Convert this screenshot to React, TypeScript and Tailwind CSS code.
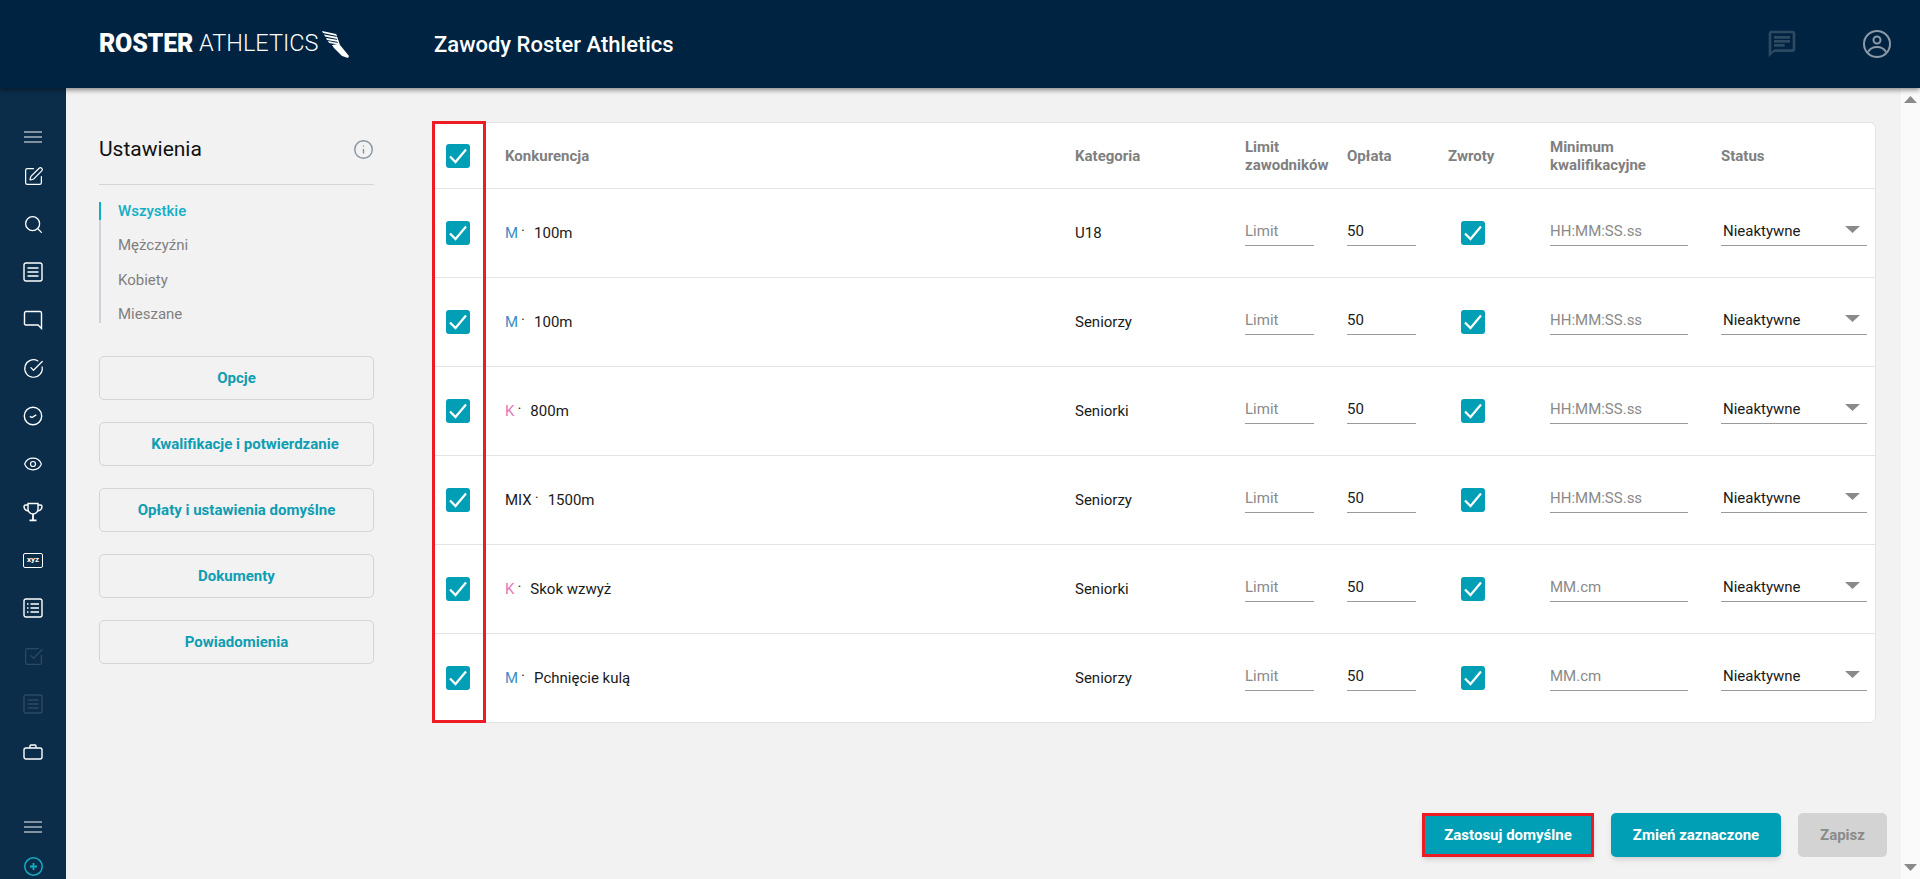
// App.tsx - ustawienia zawodów Roster Athletics
import React from "react";
import { Search, SquarePen, Eye, SquareCheckBig, CircleCheckBig, Info } from "lucide-react";

type Row = {
    sex: string;
    sexColor: string;
    name: string;
    category: string;
    minimum: string;
};

const rows: Row[] = [
    { sex: "M", sexColor: "text-[#3b8dc5]", name: "100m", category: "U18", minimum: "HH:MM:SS.ss" },
    { sex: "M", sexColor: "text-[#3b8dc5]", name: "100m", category: "Seniorzy", minimum: "HH:MM:SS.ss" },
    { sex: "K", sexColor: "text-[#e27ab5]", name: "800m", category: "Seniorki", minimum: "HH:MM:SS.ss" },
    { sex: "MIX", sexColor: "text-[#1a1a1a]", name: "1500m", category: "Seniorzy", minimum: "HH:MM:SS.ss" },
    { sex: "K", sexColor: "text-[#e27ab5]", name: "Skok wzwyż", category: "Seniorki", minimum: "MM.cm" },
    { sex: "M", sexColor: "text-[#3b8dc5]", name: "Pchnięcie kulą", category: "Seniorzy", minimum: "MM.cm" },
];

const panelButtons = [
    "Opcje",
    "Kwalifikacje i potwierdzanie",
    "Opłaty i ustawienia domyślne",
    "Dokumenty",
    "Powiadomienia",
];

const gridCols = "grid grid-cols-[72px_570px_170px_102px_101px_102px_171px_1fr] items-center";

const Check = () => (
    <span className="flex h-6 w-6 items-center justify-center rounded-[3px] bg-[#009fb5]">
        <svg width="20" height="20" viewBox="0 0 20 20" fill="none" stroke="#fff" strokeWidth="2.2">
            <path d="M2 10.500 7.500 16 18 3.500" />
        </svg>
    </span>
);

const Burger = () => (
    <svg width="18" height="12" viewBox="0 0 18 12" stroke="#a9b4be" strokeWidth="1.3">
        <path d="M0 1h18M0 6h18M0 11h18" />
    </svg>
);

const ArticleBox = ({ color = "#fff" }: { color?: string }) => (
    <svg width="20" height="20" viewBox="0 0 20 20" fill="none" stroke={color} strokeWidth="1.4">
        <rect x="1" y="1" width="18" height="18" rx="2" />
        <path d="M4.500 6h11M4.500 10h11M4.500 14h11" />
    </svg>
);

const sideIcons: React.ReactNode[] = [
    <SquarePen key="edit" size={21} color="#fff" strokeWidth={1.4} />,
    <Search key="search" size={21} color="#fff" strokeWidth={1.5} />,
    <ArticleBox key="article" />,
    <svg key="chat" width="20" height="20" viewBox="0 0 20 20" fill="none" stroke="#fff" strokeWidth="1.4">
        <path d="M3 1.500h14a1.500 1.500 0 0 1 1.500 1.500v15.500l-3.500-3.500H3A1.500 1.500 0 0 1 1.500 13V3A1.500 1.500 0 0 1 3 1.500z" />
    </svg>,
    <CircleCheckBig key="check" size={21} color="#fff" strokeWidth={1.4} />,
    <svg key="clock" width="20" height="20" viewBox="0 0 20 20" fill="none" stroke="#fff" strokeWidth="1.4">
        <circle cx="10" cy="10" r="8.700" />
        <path d="M6.800 10.300 9 11.500 13.200 8.800" />
    </svg>,
    <Eye key="eye" size={20} color="#fff" strokeWidth={1.4} />,
    <svg key="trophy" width="20" height="20" viewBox="0 0 20 20" fill="none" stroke="#fff" strokeWidth="1.4">
        <path d="M5 1.500h10v5.500a5 5 0 0 1-10 0z" />
        <path d="M5 3H2.500A1.500 1.500 0 0 0 1 4.500C1 7 2.800 8.500 5.500 9M15 3h2.500A1.500 1.500 0 0 1 19 4.500C19 7 17.200 8.500 14.500 9" />
        <path d="M10 12v5.500M6.500 18.300h7" strokeWidth="1.800" />
    </svg>,
    <span
        key="xyz"
        className="flex h-[15px] w-[20px] items-center justify-center rounded-[2px] border border-white text-[8px] leading-none font-bold text-white"
    >
        xyz
    </span>,
    <svg key="list" width="20" height="20" viewBox="0 0 20 20" fill="none" stroke="#fff" strokeWidth="1.400">
        <rect x="1" y="1" width="18" height="18" rx="2" />
        <path d="M4 6h1.500M4 10h1.500M4 14h1.500M7.500 6h8.500M7.500 10h8.500M7.500 14h8.500" />
    </svg>,
    <SquareCheckBig key="off-check" size={21} color="#2e4a63" strokeWidth={1.4} />,
    <ArticleBox key="off-article" color="#2e4a63" />,
    <svg key="case" width="20" height="16" viewBox="0 0 20 16" fill="none" stroke="#fff" strokeWidth="1.400">
        <rect x="1" y="4" width="18" height="11" rx="2" />
        <path d="M7 4V2A1 1 0 0 1 8 1h4a1 1 0 0 1 1 1v2" />
    </svg>,
];

const Field = ({ width, children, dark }: { width: string; children: string; dark?: boolean }) => (
    <div
        className={`flex h-[26px] items-center border-b border-[#9a9a9a] pb-[3px] ${width} ${
            dark ? "text-[#1a1a1a]" : "text-[#8a8a8a]"
        }`}
    >
        {children}
    </div>
);

const Sidebar = () => (
    <aside className="flex w-[66px] shrink-0 flex-col items-center bg-[#0b2d4a] pt-[34px]">
        <div className="flex h-[30px] items-center">
            <Burger />
        </div>
        {sideIcons.map((icon, i) => (
            <div key={i} className="flex h-12 items-center justify-center">
                {icon}
            </div>
        ))}
        <div className="mt-auto flex h-[26px] items-center">
            <Burger />
        </div>
        <div className="mt-[13px] flex h-[26px] items-center">
            <svg width="19" height="19" viewBox="0 0 19 19" fill="none" stroke="#12aec6" strokeWidth="1.500">
                <circle cx="9.500" cy="9.500" r="8.700" />
                <path d="M9.500 6v7M6 9.500h7" strokeWidth="1.800" />
            </svg>
        </div>
    </aside>
);

const SettingsPanel = () => (
    <div className="w-[275px] shrink-0">
        <div className="flex h-[63px] items-center justify-between border-b border-[#d4d4d4] pb-[6px]">
            <h2 className="text-[21px] font-normal text-[#111]">Ustawienia</h2>
            <Info size={21} color="#8593a0" strokeWidth={1.6} className="mb-[2px]" />
        </div>
        <ul className="mt-[17px] border-l-2 border-[#cdd2d8] text-[15px] text-[#808080]">
            <li className="-ml-[2px] flex h-[18px] items-center border-l-2 border-[#12aec6] pl-[17px] font-medium text-[#12aec6]">
                Wszystkie
            </li>
            <li className="mt-4 flex h-[18px] items-center pl-[17px]">Mężczyźni</li>
            <li className="mt-[17px] flex h-[18px] items-center pl-[17px]">Kobiety</li>
            <li className="mt-4 flex h-[18px] items-center pl-[17px]">Mieszane</li>
        </ul>
        <div className="mt-[33px] flex flex-col gap-[22px] text-[15px] font-bold text-[#0e9db2]">
            {panelButtons.map((label, i) => (
                <button
                    key={label}
                    className={`h-11 rounded-[5px] border border-[#d5d5d5] ${i === 1 ? "pl-[17px]" : ""}`}
                >
                    {label}
                </button>
            ))}
        </div>
    </div>
);

const EventsTable = () => (
    <div className="relative min-w-0 flex-1 rounded-md border border-[#e3e3e3] bg-white">
        <div className={`${gridCols} h-[65px] text-[15px] leading-[18px] font-bold text-[#7f7f7f]`}>
            <div className="pl-[13px]">
                <Check />
            </div>
            <div>Konkurencja</div>
            <div>Kategoria</div>
            <div>
                Limit
                <br />
                zawodników
            </div>
            <div>Opłata</div>
            <div>Zwroty</div>
            <div>
                Minimum
                <br />
                kwalifikacyjne
            </div>
            <div>Status</div>
        </div>
        {rows.map((row, i) => (
            <div key={i} className={`${gridCols} h-[89px] border-t border-[#e3e3e3] text-[15px] text-[#1a1a1a]`}>
                <div className="pl-[13px]">
                    <Check />
                </div>
                <div className="pt-[1px]">
                    <span className={row.sexColor}>{row.sex}</span>
                    <span className="relative -top-[2px] mr-[9px] ml-[3px] text-[#333]">·</span>
                    <span>{row.name}</span>
                </div>
                <div>{row.category}</div>
                <Field width="w-[69px]">Limit</Field>
                <Field width="w-[69px]" dark>
                    50
                </Field>
                <div className="pl-[13px]">
                    <Check />
                </div>
                <Field width="w-[138px]">{row.minimum}</Field>
                <div className="flex h-[26px] w-[146px] items-center justify-between border-b border-[#9a9a9a] pr-[7px] pb-[3px] pl-[2px]">
                    Nieaktywne
                    <svg width="15" height="7" viewBox="0 0 15 7" fill="#8a8a8a" className="mb-[3px]">
                        <path d="M0 0h15L7.500 7z" />
                    </svg>
                </div>
            </div>
        ))}
        {/* czerwone zaznaczenie kolumny */}
        <div className="absolute top-[-2px] bottom-[-1px] left-[-1px] w-[54px] border-[3px] border-[#ed1c24]" />
    </div>
);

const Scrollbar = () => (
    <div className="flex w-[19px] shrink-0 flex-col items-center justify-between bg-[#fafafa] pt-[8px] pb-[8px]">
        <svg width="13" height="7" viewBox="0 0 13 7" fill="#8a8a8a">
            <path d="M0 7h13L6.500 0z" />
        </svg>
        <svg width="13" height="7" viewBox="0 0 13 7" fill="#8a8a8a">
            <path d="M0 0h13L6.500 7z" />
        </svg>
    </div>
);

export default function App() {
    return (
        <div className="flex h-screen flex-col overflow-hidden bg-[#f2f2f2] font-['Roboto',sans-serif]">
            {/* górny pasek */}
            <header className="relative z-10 flex h-[88px] shrink-0 items-center bg-[#002341] pr-[29px] pl-[99px] shadow-[0_2px_5px_rgba(0,0,0,0.45)]">
                <div className="flex w-[335px] items-center text-white">
                    <span className="text-[25px] font-black tracking-[-0.2px]">ROSTER</span>
                    <span className="ml-[6px] text-[23.5px] font-light">ATHLETICS</span>
                    <svg width="28" height="28" viewBox="0 0 28 28" className="mt-[2px] ml-[4px]" fill="#fff">
                        <path d="M0 0 14 3 15 5 1 2zM2 3.500 15 6 15.500 8 3 5.500zM4 7l12 2 .5 2L5 9zM6 10l10 2 .5 1.500L7 12z" />
                        <path d="M14 3l4 11 9 11-1 2-6-2-8-8-2-3 6-1z" />
                    </svg>
                </div>
                <h1 className="text-[22px] font-medium text-white">Zawody Roster Athletics</h1>
                <svg width="32" height="32" viewBox="0 0 24 24" fill="#2d4a63" className="ml-auto">
                    <path d="M20 2H4c-1.100 0-2 .9-2 2v18l4-4h14c1.100 0 2-.9 2-2V4c0-1.100-.9-2-2-2zm0 14H6l-2 2V4h16v12z" />
                    <path d="M6 12h8v2H6zM6 9h12v2H6zM6 6h12v2H6z" />
                </svg>
                <svg width="28" height="28" viewBox="0 0 28 28" fill="none" stroke="#8a9aa8" strokeWidth="2" className="ml-[65px]">
                    <circle cx="14" cy="14" r="13" />
                    <circle cx="14" cy="10" r="3.500" />
                    <path d="M5 22c2-3.500 5.500-5 9-5s7 1.500 9 5" />
                </svg>
            </header>

            <div className="flex min-h-0 flex-1">
                <Sidebar />
                <main className="flex min-w-0 flex-1 flex-col">
                    <div className="flex gap-[58px] pt-[34px] pr-[25px] pl-[33px]">
                        <SettingsPanel />
                        <EventsTable />
                    </div>
                    <div className="mt-auto flex justify-end gap-[17px] pr-[14px] pb-[22px] text-[15px] font-bold">
                        <button className="h-11 w-[172px] border-[3px] border-[#ed1c24] bg-[#009fb5] text-white shadow-md">
                            Zastosuj domyślne
                        </button>
                        <button className="h-11 w-[170px] rounded-[5px] bg-[#009fb5] text-white shadow-md">
                            Zmień zaznaczone
                        </button>
                        <button className="h-11 w-[89px] rounded-[5px] bg-[#d3d3d3] text-[#8a8a8a]">Zapisz</button>
                    </div>
                </main>
                <Scrollbar />
            </div>
        </div>
    );
}
